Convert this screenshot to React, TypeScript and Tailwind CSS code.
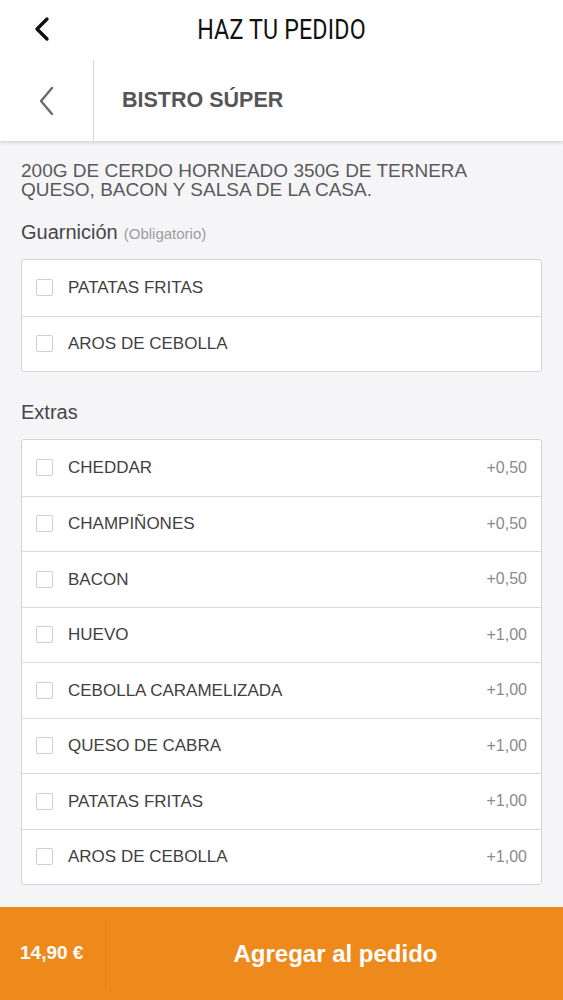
import React from "react";

interface Option {
  name: string;
  price?: string;
}

const guarnicion: Option[] = [{ name: "PATATAS FRITAS" }, { name: "AROS DE CEBOLLA" }];

const extras: Option[] = [
  { name: "CHEDDAR", price: "+0,50" },
  { name: "CHAMPIÑONES", price: "+0,50" },
  { name: "BACON", price: "+0,50" },
  { name: "HUEVO", price: "+1,00" },
  { name: "CEBOLLA CARAMELIZADA", price: "+1,00" },
  { name: "QUESO DE CABRA", price: "+1,00" },
  { name: "PATATAS FRITAS", price: "+1,00" },
  { name: "AROS DE CEBOLLA", price: "+1,00" },
];

function OptionList({ items }: { items: Option[] }) {
  return (
    <div className="mx-[21px] bg-white border border-[#d4d4d6] rounded-[3px]">
      {items.map((item, i) => (
        <label
          key={item.name + i}
          className={`flex items-center h-[55.5px] pl-[14px] pr-[14px] ${i > 0 ? "border-t border-[#d9d9db]" : ""}`}
        >
          <span className="w-[17px] h-[17px] border border-[#cfcfd1] rounded-[2px] bg-white shrink-0" />
          <span className="ml-[15px] text-[17px] text-[#3f3f41] flex-1">{item.name}</span>
          {item.price && <span className="text-[16px] text-[#8a8a8c]">{item.price}</span>}
        </label>
      ))}
    </div>
  );
}

export default function App() {
  return (
    <div className="w-[563px] h-[1000px] bg-[#f5f5f7] flex flex-col font-['Liberation_Sans',Arial,sans-serif] overflow-hidden">
      {/* cabecera */}
      <header className="h-[60px] bg-white flex items-center relative shrink-0">
        <svg className="absolute left-[33px] top-[16px]" width="18" height="26" viewBox="0 0 18 26">
          <polyline points="14,3 4,13 14,23" fill="none" stroke="#111" strokeWidth="3.4" strokeLinecap="round" strokeLinejoin="round" />
        </svg>
        <h1 className="w-full text-center text-[27px] text-[#111] font-['Roboto',sans-serif] scale-x-[0.86] tracking-[0.2px]">
          HAZ TU PEDIDO
        </h1>
      </header>

      <div className="h-[81px] bg-white flex shrink-0 shadow-[0_2px_3px_rgba(0,0,0,0.12)] relative z-10">
        <div className="w-[94px] flex items-center justify-center border-r border-[#d6d6d6]">
          <svg width="20" height="30" viewBox="0 0 20 30">
            <polyline points="15,2 4,15 15,28" fill="none" stroke="#6b6b6b" strokeWidth="2.4" strokeLinecap="round" strokeLinejoin="round" />
          </svg>
        </div>
        <div className="flex items-center pl-[28px] text-[21.5px] font-bold text-[#555557]">BISTRO SÚPER</div>
      </div>

      <main className="flex-1 pt-[20px]">
        <p className="px-[21px] text-[19px] leading-[19px] text-[#59595b]">
          200G DE CERDO HORNEADO 350G DE TERNERA
          <br />
          QUESO, BACON Y SALSA DE LA CASA.
        </p>

        <div className="px-[21px] mt-[18px] mb-[12px] flex items-baseline">
          <span className="text-[20px] text-[#454547]">Guarnición</span>
          <span className="ml-[6px] text-[15px] text-[#9c9c9e]">(Obligatorio)</span>
        </div>
        <OptionList items={guarnicion} />

        <div className="px-[21px] mt-[25px] mb-[12px] text-[20px] text-[#454547]">Extras</div>
        <OptionList items={extras} />
      </main>

      <footer className="h-[93px] bg-[#ee8a1c] flex items-center shrink-0">
        <div className="w-[106px] h-[68px] flex items-center pl-[20px] border-r border-[#e0801a] text-[19px] font-bold text-white">
          14,90 €
        </div>
        <div className="flex-1 text-center text-[24px] font-bold text-white pl-[2px]">Agregar al pedido</div>
      </footer>
    </div>
  );
}
